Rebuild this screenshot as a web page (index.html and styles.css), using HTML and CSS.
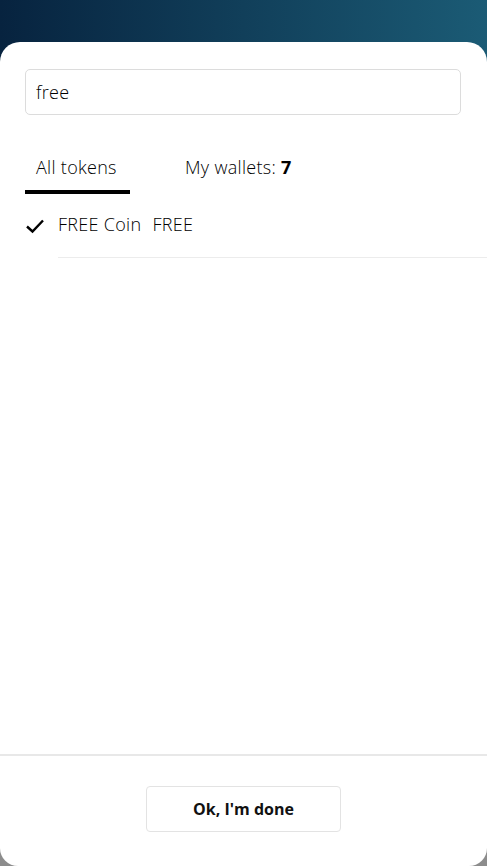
FILE: index.html
```html
<!DOCTYPE html>
<html lang="en">
<head>
    <meta charset="UTF-8">
    <meta name="viewport" content="width=device-width, initial-scale=1.0">
    <title>Select tokens</title>
    <link rel="stylesheet" href="styles.css">
</head>
<body>
    <div class="sheet">
        <div class="search">
            <input type="text" class="search-input" value="free">
        </div>

        <div class="tabs">
            <div class="tab active">All tokens</div>
            <div class="tab">My wallets: <b>7</b></div>
        </div>

        <ul class="token-list">
            <li class="token">
                <svg class="check" width="20" height="16" viewBox="0 0 20 16">
                    <path d="M2 8.5 L7.5 13.5 L18 2.5" fill="none" stroke="#000" stroke-width="2.4"/>
                </svg>
                <div class="token-name">FREE Coin <span class="symbol">FREE</span></div>
            </li>
        </ul>

        <!-- footer -->
        <div class="footer">
            <button class="done">Ok, I'm done</button>
        </div>
    </div>
</body>
</html>
```

FILE: styles.css
```css
html, body {
    height: 100%;
}

body {
    margin: 0;
    background: linear-gradient(90deg, #07233f, #1b5b75) top / 100% 80px no-repeat, #8c8c8c;
    font-family: 'Open Sans', sans-serif;
    font-weight: 300;
    letter-spacing: 0.3px;
    color: #000;
    display: flex;
    flex-direction: column;
}

.sheet {
    margin-top: 42px;
    flex: 1;
    background: #fff;
    border-radius: 20px 20px 18px 18px;
    display: flex;
    flex-direction: column;
}

.search {
    padding: 27px 26px 0 25px;
}

.search-input {
    box-sizing: border-box;
    width: 100%;
    height: 46px;
    border: 1.5px solid #dcdcdc;
    border-radius: 5px;
    padding: 0 10px;
    font-family: inherit;
    font-weight: 300;
    letter-spacing: 0.3px;
    font-size: 18px;
    color: #000;
    outline: none;
}

.tabs {
    display: flex;
    padding: 0 25px;
    margin-top: 40px;
}

.tab {
    font-size: 18px;
    padding: 0 0 11px;
    border-bottom: 4px solid transparent;
}

.tab.active {
    width: 105px;
    box-sizing: border-box;
    padding-left: 11px;
    border-bottom-color: #000;
    margin-right: 55px;
}

.tab b {
    font-weight: 700;
}

.token-list {
    list-style: none;
    margin: 0;
    padding: 0;
    flex: 1;
}

.token {
    display: flex;
    align-items: center;
    padding-left: 25px;
}

.check {
    flex: none;
    margin-right: 13px;
}

.token-name {
    flex: 1;
    font-size: 18px;
    height: 63px;
    line-height: 60px;
    border-bottom: 1px solid #ececec;
}

.symbol {
    margin-left: 6px;
}

.footer {
    border-top: 2px solid #e8e8e8;
    height: 112px;
    display: flex;
    justify-content: center;
    padding-top: 30px;
    box-sizing: border-box;
}

.done {
    width: 195px;
    height: 46px;
    background: #fff;
    border: 1.5px solid #e3e3e3;
    border-radius: 4px;
    font-family: inherit;
    font-size: 16px;
    font-weight: 700;
    letter-spacing: 0;
    color: #111;
}
```
